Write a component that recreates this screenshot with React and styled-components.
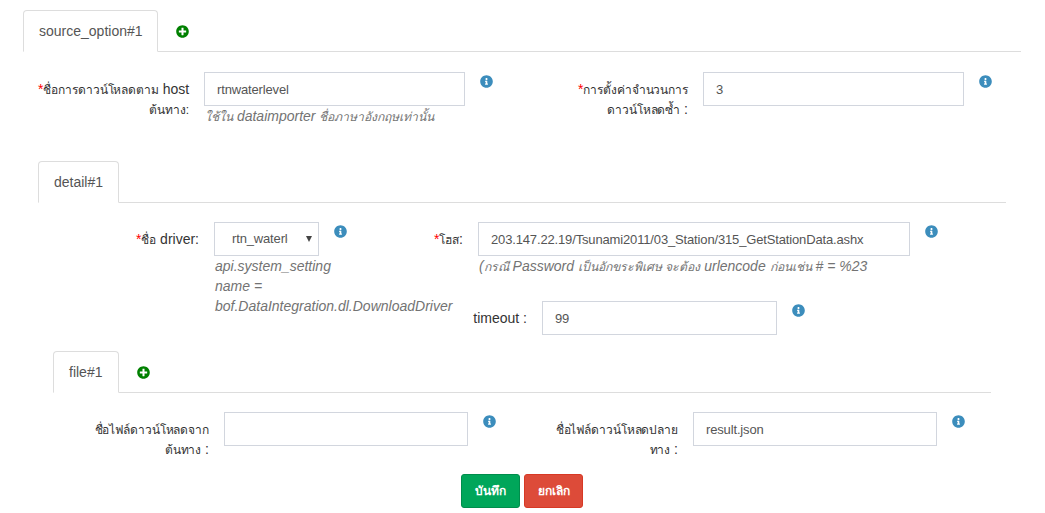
import React from 'react';
import styled, { createGlobalStyle } from 'styled-components';
import { FaInfoCircle, FaPlusCircle } from 'react-icons/fa';

const GlobalStyle = createGlobalStyle`
	* {
		box-sizing: border-box;
	}

	body {
		margin: 0;
		background: #fff;
		color: #333;
		font-family: "Liberation Sans", Arial, "Noto Sans", sans-serif;
		font-size: 14px;
		line-height: 20px;
	}
`;

const Page = styled.div`
	width: 1045px;
	padding: 10px 24px 5px 23px;
`;

const TabBar = styled.div`
	display: flex;
	align-items: flex-start;
	height: 42px;
	border-bottom: 1px solid #ddd;
`;

const Tab = styled.div`
	width: ${p => p.$width}px;
	height: 42px;
	padding: 10px 15px;
	color: #555;
	background: #fff;
	border: 1px solid #ddd;
	border-bottom-color: #fff;
	border-radius: 4px 4px 0 0;
	white-space: nowrap;
`;

const AddTab = styled.div`
	display: flex;
	align-items: center;
	height: 41px;
	padding: 1px 18px 0;
	color: #008000;
	font-size: 13px;
`;

const NestedPanel = styled.div`
	padding: ${p => p.$top || 0}px 15px 0;
`;

const HalfRow = styled.div`
	display: grid;
	grid-template-columns: 1fr 1fr;
	padding-top: ${p => p.$top}px;
`;

const Field = styled.div`
	display: grid;
	grid-template-columns: ${p => p.$label}px ${p => p.$input}px auto;
	align-content: start;
	justify-content: start;
	margin-top: ${p => p.$gap || 0}px;
	padding-left: ${p => p.$indent || 0}px;
`;

const Label = styled.label`
	grid-row: span 2;
	padding: 7px 15px 0 0;
	text-align: right;
	white-space: nowrap;
`;

const Thai = styled.span`
	font-size: 12px;
	line-height: 14px;
	letter-spacing: -0.1px;
`;

const Required = styled.span`
	color: #f00;
`;

const TextInput = styled.input`
	display: block;
	width: 100%;
	height: 34px;
	padding: 6px 12px;
	color: #555;
	background: #fff;
	border: 1px solid #d2d6de;
	border-radius: 0;
	font: inherit;
	font-size: 13px;
	letter-spacing: -0.15px;
	outline: none;
`;

const SelectBox = styled.div`
	position: relative;

	&::after {
		content: '';
		position: absolute;
		top: 14px;
		right: 7px;
		border-top: 6px solid #444;
		border-left: 3px solid transparent;
		border-right: 3px solid transparent;
		pointer-events: none;
	}
`;

const Select = styled.select`
	display: block;
	width: 100%;
	height: 34px;
	padding: 6px 30px 6px 17px;
	color: #555;
	background: #fff;
	border: 1px solid #d2d6de;
	border-radius: 0;
	appearance: none;
	font: inherit;
	font-size: 13px;
	letter-spacing: -0.15px;
	outline: none;
`;

const Info = styled.span`
	display: block;
	height: 14px;
	margin: 3px 0 0 15px;
	color: #3c8dbc;
	font-size: 13px;
	line-height: 14px;
`;

const Help = styled.em`
	display: block;
	grid-column: 2 / -1;
	padding-left: 1px;
	color: #737373;
	white-space: nowrap;

	${Thai} {
		font-size: 12.2px;
		letter-spacing: 0;
	}
`;

const DetailRow = styled.div`
	display: grid;
	grid-template-columns: 382px 1fr;
	padding-top: 19px;
	padding-bottom: 16px;
`;

const Actions = styled.div`
	display: flex;
	justify-content: center;
	gap: 4px;
	margin-top: 15px;
`;

const Button = styled.button`
	width: 59px;
	height: 34px;
	padding: 0;
	color: #fff;
	background: ${p => p.$bg};
	border: 1px solid ${p => p.$edge};
	border-radius: 3px;
	font: inherit;
	font-size: 12px;
	font-weight: bold;
`;

export default function App() {
	return (
		<Page>
			<GlobalStyle />
			<TabBar>
				<Tab $width={135}>source_option#1</Tab>
				<AddTab><FaPlusCircle /></AddTab>
			</TabBar>
			<HalfRow $top={20}>
				<Field $label={166} $input={261} $indent={15}>
					<Label><Required>*</Required><Thai>ชื่อการดาวน์โหลดตาม</Thai> host<br /><Thai>ต้นทาง:</Thai></Label>
					<TextInput readOnly value="rtnwaterlevel" />
					<Info><FaInfoCircle /></Info>
					<Help><Thai>ใช้ใน</Thai> dataimporter <Thai>ชื่อภาษาอังกฤษเท่านั้น</Thai></Help>
				</Field>
				<Field $label={166} $input={261} $indent={15}>
					<Label><Required>*</Required><Thai>การตั้งค่าจำนวนการ</Thai><br /><Thai>ดาวน์โหลดซ้ำ</Thai> :</Label>
					<TextInput readOnly value="3" />
					<Info><FaInfoCircle /></Info>
				</Field>
			</HalfRow>

			<NestedPanel $top={35}>
				<TabBar>
					<Tab $width={81}>detail#1</Tab>
				</TabBar>
				<DetailRow>
					<Field $label={176} $input={105}>
						<Label><Required>*</Required><Thai>ชื่อ</Thai> driver:</Label>
						<SelectBox>
							<Select defaultValue="rtn_waterlevel">
								<option>rtn_waterlevel</option>
							</Select>
						</SelectBox>
						<Info><FaInfoCircle /></Info>
						<Help>api.system_setting<br />name =<br />bof.DataIntegration.dl.DownloadDriver</Help>
					</Field>
					<div>
						<Field $label={58} $input={432}>
							<Label><Required>*</Required><Thai>โฮส</Thai>:</Label>
							<TextInput readOnly value="203.147.22.19/Tsunami2011/03_Station/315_GetStationData.ashx" />
							<Info><FaInfoCircle /></Info>
							<Help>(<Thai>กรณี</Thai> Password <Thai>เป็นอักขระพิเศษ จะต้อง</Thai> urlencode <Thai>ก่อนเช่น</Thai> # = %23</Help>
						</Field>
						<Field $label={122} $input={235} $gap={25}>
							<Label>timeout :</Label>
							<TextInput readOnly value="99" />
							<Info><FaInfoCircle /></Info>
						</Field>
					</div>
				</DetailRow>

				<NestedPanel>
					<TabBar>
						<Tab $width={66}>file#1</Tab>
						<AddTab><FaPlusCircle /></AddTab>
					</TabBar>
					<HalfRow $top={19}>
						<Field $label={171} $input={244}>
							<Label><Thai>ชื่อไฟล์ดาวน์โหลดจาก</Thai><br /><Thai>ต้นทาง</Thai> :</Label>
							<TextInput readOnly value="" />
							<Info><FaInfoCircle /></Info>
						</Field>
						<Field $label={171} $input={244}>
							<Label><Thai>ชื่อไฟล์ดาวน์โหลดปลาย</Thai><br /><Thai>ทาง</Thai> :</Label>
							<TextInput readOnly value="result.json" />
							<Info><FaInfoCircle /></Info>
						</Field>
					</HalfRow>
				</NestedPanel>
			</NestedPanel>

			<Actions>
				<Button $bg="#00a65a" $edge="#008d4c">บันทึก</Button>
				<Button $bg="#dd4b39" $edge="#d73925">ยกเลิก</Button>
			</Actions>
		</Page>
	);
}
